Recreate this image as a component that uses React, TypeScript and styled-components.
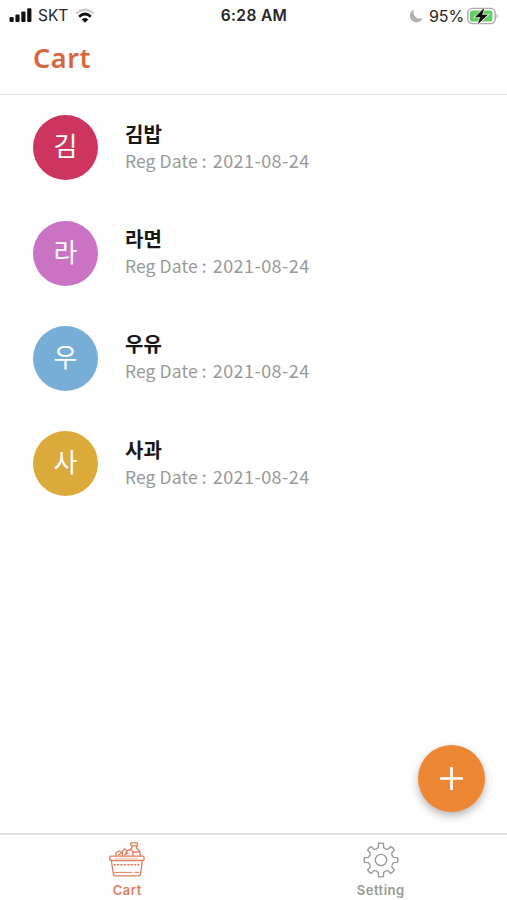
import React from "react";
import styled, { createGlobalStyle } from "styled-components";

const GlobalStyle = createGlobalStyle`
  * { box-sizing: border-box; }
  body { margin: 0; background: #fefefe; }
`;

const Screen = styled.main`
  position: relative;
  display: flex;
  flex-direction: column;
  width: 507px;
  height: 900px;
  overflow: hidden;
  background: #fefefe;
  font-family: "Noto Sans CJK KR", sans-serif;
`;

const StatusBar = styled.div`
  display: grid;
  grid-template-columns: 1fr auto 1fr;
  align-items: center;
  height: 30px;
  padding: 0 8px 0 9px;
  font-family: Inter, "Liberation Sans", sans-serif;
  font-size: 16px;
  line-height: 30px;
  color: #262626;
`;

const StatusGroup = styled.div<{ $end?: boolean }>`
  display: flex;
  align-items: center;
  justify-content: ${(p) => (p.$end ? "flex-end" : "flex-start")};
  height: 30px;
  svg { display: block; flex: none; }
`;

const Carrier = styled.span`
  margin: 0 7px 0 5px;
  font-size: 15.5px;
`;

const Clock = styled.span`
  padding-top: 1px;
  font-size: 15.5px;
  font-weight: 600;
  letter-spacing: 0.35px;
`;

const Percent = styled.span`
  margin: 0 3px 0 6px;
  font-size: 16px;
  letter-spacing: -0.1px;
`;

const Header = styled.header`
  height: 65px;
  padding-left: 33px;
  border-bottom: 1px solid #e4e4e4;
`;

const Title = styled.h1`
  margin: 0;
  font-family: "Noto Sans", sans-serif;
  font-size: 27px;
  font-weight: 600;
  line-height: 56px;
  letter-spacing: 0.6px;
  color: #d9653b;
`;

const List = styled.ul`
  flex: 1;
  margin: 0;
  padding: 0.4px 0 0;
  list-style: none;
`;

const Row = styled.li`
  display: flex;
  align-items: center;
  gap: 27px;
  height: 105.2px;
  padding-left: 33px;
`;

const Avatar = styled.div<{ $color: string }>`
  width: 65px;
  height: 65px;
  border-radius: 50%;
  background: ${(p) => p.$color};
  color: #fff;
  font-size: 26px;
  line-height: 60px;
  text-align: center;
`;

const Details = styled.div`
  padding-bottom: 2px;
`;

const Name = styled.div`
  font-size: 20px;
  font-weight: 700;
  line-height: 27px;
  color: #171717;
`;

const RegDate = styled.div`
  font-size: 17.5px;
  line-height: 27px;
  letter-spacing: 0.1px;
  color: #999;
  white-space: nowrap;
`;

const DateValue = styled.time`
  margin-left: 2px;
  font-size: 18px;
  letter-spacing: 0.45px;
`;

const AddButton = styled.button`
  position: absolute;
  right: 22px;
  bottom: 88px;
  display: grid;
  place-items: center;
  width: 67px;
  height: 67px;
  padding: 0;
  border: 0;
  border-radius: 50%;
  background: #ed8733;
  box-shadow: 0 4px 9px rgba(0, 0, 0, 0.28);
`;

const TabBar = styled.nav`
  display: grid;
  grid-template-columns: 1fr 1fr;
  height: 67px;
  border-top: 2px solid #e1e1e1;
`;

const Tab = styled.div<{ $active?: boolean }>`
  display: flex;
  flex-direction: column;
  align-items: center;
  padding: 7px 0 0 1px;
  color: ${(p) => (p.$active ? "#df7f60" : "#999")};
  svg { display: block; }
`;

const TabLabel = styled.span`
  margin-top: 4px;
  font-family: Inter, sans-serif;
  font-size: 13px;
  font-weight: 600;
  line-height: 17px;
  letter-spacing: 0.5px;
`;

const SignalIcon = () => (
  <svg width="24" height="16" viewBox="0 0 24 16" fill="#111">
    <rect x="0.5" y="9" width="4.2" height="5" rx="1" />
    <rect x="6.4" y="6.5" width="4.2" height="7.5" rx="1" />
    <rect x="12.3" y="3.5" width="4.2" height="10.5" rx="1" />
    <rect x="18.2" y="0.3" width="4.2" height="13.7" rx="1" />
  </svg>
);

const WifiIcon = () => (
  <svg width="20" height="16" viewBox="0 0 20 16" fill="none">
    <path d="M1 5.7Q10-2.1 19 5.7" stroke="#cfcfcf" strokeWidth="2.4" />
    <path d="M4.1 8.7Q10 3.3 15.9 8.7" stroke="#111" strokeWidth="2.7" />
    <path d="M6.7 11.4Q10 8.6 13.3 11.4L10 14.8Z" fill="#111" />
  </svg>
);

const MoonIcon = () => (
  <svg width="14" height="14" viewBox="0 0 14 14">
    <path d="M4.8.8C-.5 3.2-.2 10 4.4 12.5 8 14.4 12.1 12.7 13.4 9.2 7.5 10.8 3.5 6.5 4.8.8Z" fill="#b0b0b0" />
  </svg>
);

const BatteryIcon = () => (
  <svg width="32" height="18" viewBox="0 0 32 18">
    <rect x="0.8" y="1.4" width="27.4" height="15.2" rx="4.5" fill="#fff" stroke="#aaa" strokeWidth="1.4" />
    <rect x="2.9" y="3.5" width="22.6" height="11" rx="2.6" fill="#67ce67" />
    <path d="M29.6 6.7Q32.2 9 29.6 11.3Z" fill="#aaa" />
    <path d="M17.6.6 7.8 10.2H13.2L10.5 17.4 21 7.8H15.3Z" fill="#111" stroke="#fff" strokeWidth="1.3" paintOrder="stroke" />
  </svg>
);

const BasketIcon = () => (
  <svg width="36" height="36" viewBox="0 0 36 36" fill="none" stroke="currentColor" strokeWidth="1.3" strokeLinejoin="round" strokeLinecap="round">
    <rect x="0.8" y="14.2" width="34.2" height="4.3" rx="1" />
    <path d="M2.3 18.5 4.3 31.8Q4.6 33.8 6.5 33.8H29.3Q31.2 33.8 31.5 31.8L33.5 18.5" />
    <path d="M5 22.8H31" strokeDasharray="1.3 2.1" strokeWidth="1.4" />
    <path d="M5.5 30.4H23M26 30.4H30.2" strokeWidth="1" />
    <path d="M6.5 16.3H28.5" strokeWidth=".5" />
    <path d="M7 14V10.7L10.2 9 13.3 11V14M12.8 10.5 15.2 6.8 18 8.8 15.8 14M17 10.3Q21.5 5 24 10.2V14M9.5 12.8 12 11.2M16 12.7 19 10.8" />
    <rect x="21.8" y="0.9" width="6.8" height="3" rx=".7" />
    <path d="M22.8 4V6.3L20.7 8M27.6 4V6.4Q31.2 8.5 31.2 12V14M24 10H30.8" />
  </svg>
);

const gearPath = (() => {
  const steps: string[] = [];
  const point = (radius: number, degrees: number) => {
    const a = (degrees * Math.PI) / 180;
    return `${(18 + radius * Math.sin(a)).toFixed(2)} ${(18 - radius * Math.cos(a)).toFixed(2)}`;
  };
  for (let i = 0; i < 8; i++) {
    const a = i * 45;
    steps.push(`${i ? "L" : "M"}${point(12.8, a - 12)}L${point(16.7, a - 8.5)}`);
    steps.push(`Q${point(17.2, a)} ${point(16.7, a + 8.5)}L${point(12.8, a + 12)}`);
    steps.push(`Q${point(11.3, a + 22.5)} ${point(12.8, a + 33)}`);
  }
  return steps.join("") + "Z";
})();

const GearIcon = () => (
  <svg width="36" height="36" viewBox="0 0 36 36" fill="none" stroke="currentColor" strokeWidth="1.3" strokeLinejoin="round">
    <path d={gearPath} />
    <circle cx="18" cy="18" r="5.7" />
  </svg>
);

const items = [
  { name: "김밥", color: "#ce355e" },
  { name: "라면", color: "#ca73c4" },
  { name: "우유", color: "#77aed8" },
  { name: "사과", color: "#dbaa3b" },
];

export default function App() {
  return (
    <Screen>
      <GlobalStyle />
      <StatusBar>
        <StatusGroup>
          <SignalIcon />
          <Carrier>SKT</Carrier>
          <WifiIcon />
        </StatusGroup>
        <Clock>6:28 AM</Clock>
        <StatusGroup $end>
          <MoonIcon />
          <Percent>95%</Percent>
          <BatteryIcon />
        </StatusGroup>
      </StatusBar>
      <Header>
        <Title>Cart</Title>
      </Header>
      <List>
        {items.map((item) => (
          <Row key={item.name}>
            <Avatar $color={item.color}>{item.name[0]}</Avatar>
            <Details>
              <Name>{item.name}</Name>
              <RegDate>
                Reg Date : <DateValue>2021-08-24</DateValue>
              </RegDate>
            </Details>
          </Row>
        ))}
      </List>
      <AddButton aria-label="Add item">
        <svg width="25" height="25" viewBox="0 0 25 25" stroke="#fff" strokeWidth="2.7">
          <path d="M12.5 1V24M1 12.5H24" />
        </svg>
      </AddButton>
      <TabBar>
        <Tab $active>
          <BasketIcon />
          <TabLabel>Cart</TabLabel>
        </Tab>
        <Tab>
          <GearIcon />
          <TabLabel>Setting</TabLabel>
        </Tab>
      </TabBar>
    </Screen>
  );
}
